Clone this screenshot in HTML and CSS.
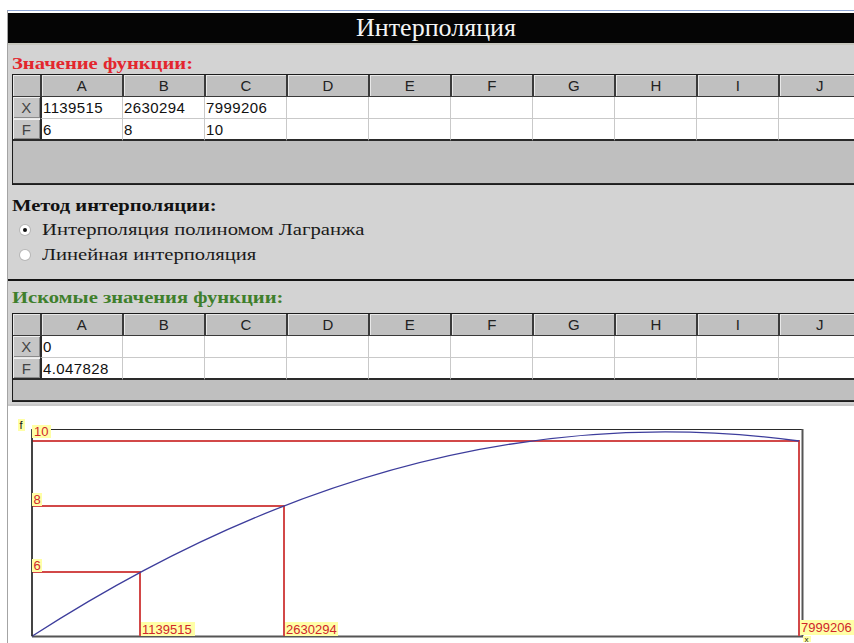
FILE: index.html
```html
<!DOCTYPE html>
<html lang="ru">
<head>
<meta charset="utf-8">
<title>Интерполяция</title>
<link rel="stylesheet" href="styles.css">
</head>
<body>
<div class="app">
  <div class="titlebar">Интерполяция</div>

  <div class="panel">
    <h2 class="caption caption-red">Значение функции:</h2>
    <div class="sheet">
      <div class="grid">
        <div class="corner"></div>
        <div class="col">A</div><div class="col">B</div><div class="col">C</div><div class="col">D</div><div class="col">E</div>
        <div class="col">F</div><div class="col">G</div><div class="col">H</div><div class="col">I</div><div class="col">J</div>

        <div class="row">X</div>
        <div class="cell">1139515</div><div class="cell">2630294</div><div class="cell">7999206</div><div class="cell"></div><div class="cell"></div>
        <div class="cell"></div><div class="cell"></div><div class="cell"></div><div class="cell"></div><div class="cell"></div>

        <div class="row last">F</div>
        <div class="cell last">6</div><div class="cell last">8</div><div class="cell last">10</div><div class="cell last"></div><div class="cell last"></div>
        <div class="cell last"></div><div class="cell last"></div><div class="cell last"></div><div class="cell last"></div><div class="cell last"></div>
      </div>
      <div class="sheet-rest tall"></div>
    </div>

    <h2 class="caption caption-black">Метод интерполяции:</h2>
    <ul class="methods">
      <li class="method"><span class="radio checked"></span><span class="method-text">Интерполяция полиномом Лагранжа</span></li>
      <li class="method"><span class="radio"></span><span class="method-text">Линейная интерполяция</span></li>
    </ul>
    <hr class="rule">

    <h2 class="caption caption-green">Искомые значения функции:</h2>
    <div class="sheet">
      <div class="grid">
        <div class="corner"></div>
        <div class="col">A</div><div class="col">B</div><div class="col">C</div><div class="col">D</div><div class="col">E</div>
        <div class="col">F</div><div class="col">G</div><div class="col">H</div><div class="col">I</div><div class="col">J</div>

        <div class="row">X</div>
        <div class="cell">0</div><div class="cell"></div><div class="cell"></div><div class="cell"></div><div class="cell"></div>
        <div class="cell"></div><div class="cell"></div><div class="cell"></div><div class="cell"></div><div class="cell"></div>

        <div class="row last">F</div>
        <div class="cell last">4.047828</div><div class="cell last"></div><div class="cell last"></div><div class="cell last"></div><div class="cell last"></div>
        <div class="cell last"></div><div class="cell last"></div><div class="cell last"></div><div class="cell last"></div><div class="cell last"></div>
      </div>
      <div class="sheet-rest"></div>
    </div>
  </div>

  <div class="chart">
    <svg class="plot" width="846" height="236" viewBox="8 407 846 236" xmlns="http://www.w3.org/2000/svg">
      <!-- frame -->
      <path d="M32 430.5 H802.5 V637.5 H32 Z" fill="none" stroke="#2a2a2a" stroke-width="1"/>
      <path d="M32 637.5 H803" stroke="#555" stroke-width="2"/>
      <path d="M802.5 430 V638" stroke="#555" stroke-width="2"/>
      <!-- guides to the nodes -->
      <g fill="none" stroke="#d24848" stroke-width="2">
        <path d="M32 442 H799 V637"/>
        <path d="M32 507 H284 V637"/>
        <path d="M32 573 H140 V637"/>
      </g>
      <!-- Lagrange polynomial -->
      <path d="M32 637.3 Q415.5 389.7 799 442" fill="none" stroke="#3d3d9c" stroke-width="1.3"/>
      <path d="M32 637 V430" stroke="#2a2a2a" stroke-width="1.5"/>

      <!-- labels -->
      <g class="tag">
        <rect x="18" y="420" width="7" height="12" fill="#ffffa6"/>
        <text x="19.5" y="430" class="tag-axis">f</text>

        <rect x="32" y="426" width="19" height="13" fill="#ffffa6"/>
        <text x="34" y="437">10</text>

        <rect x="32" y="494" width="10" height="13" fill="#ffffa6"/>
        <text x="33.5" y="505">8</text>

        <rect x="32" y="560" width="10" height="13" fill="#ffffa6"/>
        <text x="33.5" y="571">6</text>

        <rect x="141" y="623" width="54" height="14" fill="#ffffa6"/>
        <text x="142" y="635">1139515</text>

        <rect x="285" y="623" width="53" height="14" fill="#ffffa6"/>
        <text x="286" y="635">2630294</text>

        <rect x="800" y="621" width="54" height="15" fill="#ffffa6"/>
        <text x="801" y="633">7999206</text>

        <rect x="803" y="637" width="8" height="6" fill="#ffffa6"/>
        <text x="804.5" y="643" class="tag-axis tag-small">x</text>
      </g>
    </svg>
  </div>
</div>
</body>
</html>
```
FILE: styles.css
```css
html, body {
  margin: 0;
  padding: 0;
  background: #ffffff;
  overflow: hidden;
}

.app {
  margin: 10px 0 0 7px;
  border-top: 1px solid #8ea6d6;
  border-left: 1px solid #a4a4a4;
  padding-top: 2px;
  overflow: hidden;
  font-family: "Liberation Serif", "Times New Roman", serif;
}

.titlebar {
  height: 30px;
  line-height: 30px;
  padding-left: 10px;
  background: #050505;
  color: #f4f4f4;
  text-align: center;
  font-size: 26px;
  border-bottom: 2px solid #c6c6be;
}

.panel {
  background: #d3d3d3;
  padding: 9px 0 2px 4px;
}

/* the form's captions are drawn wide */
.caption {
  margin: 0;
  font-size: 17px;
  line-height: 19px;
  font-weight: bold;
  transform: scaleX(1.21);
  transform-origin: 0 50%;
}

.caption-red { color: #e3262e; margin-bottom: 1px; }
.caption-black { color: #111111; margin-top: 11px; }
.caption-green { color: #3f7f2c; margin-top: 7px; margin-bottom: 6px; }

/* spreadsheet-like grid */
.sheet {
  width: 858px;
  border: 1px solid #1c1c1c;
  border-right: none;
  background: #bfbfbf;
}

.grid {
  display: grid;
  grid-template-columns: 27px repeat(10, 82px);
  grid-auto-rows: 22px;
  font-family: "Liberation Sans", Arial, sans-serif;
  font-size: 15px;
  letter-spacing: 0.4px;
}

.corner,
.col {
  background: #c0c0c0;
  border-bottom: 1px solid #3a3a3a;
  box-shadow: inset 1px 1px 0 #e8e8e8;
}

.col {
  border-left: 2px solid #3a3a3a;
  text-align: center;
  line-height: 21px;
  color: #222;
}

.row {
  background: #c6c6c6;
  color: #444;
  text-align: center;
  line-height: 21px;
  border-bottom: 1px solid #e8e8e8;
  box-shadow: inset 1px 1px 0 #f0f0f0, inset -1px -1px 0 #8a8a8a;
}

.cell {
  background: #ffffff;
  border-left: 1px solid #c9c9c9;
  border-bottom: 1px solid #c9c9c9;
  padding-left: 1px;
  line-height: 21px;
  color: #111;
  white-space: nowrap;
  overflow: hidden;
}

.grid > .cell:nth-child(11n + 2) {
  border-left: 2px solid #2a2a2a;
}

.cell.last,
.row.last {
  border-bottom: 2px solid #2a2a2a;
}

.sheet-rest {
  height: 20px;
  border-bottom: 1px solid #2a2a2a;
}

.sheet-rest.tall {
  height: 42px;
}

/* interpolation method */
.methods {
  list-style: none;
  margin: 2px 0 0 0;
  padding: 0 0 0 8px;
}

.method {
  display: flex;
  align-items: center;
  height: 25px;
  font-size: 17.5px;
  color: #1a1a1a;
}

.method-text {
  display: inline-block;
  transform: scaleX(1.18);
  transform-origin: 0 50%;
}

.radio {
  width: 10px;
  height: 10px;
  margin-right: 12px;
  border-radius: 50%;
  background: #ffffff;
  box-shadow: 0 0 0 1px #b8b8b8;
  position: relative;
}

.radio.checked::after {
  content: "";
  position: absolute;
  left: 3px;
  top: 3px;
  width: 4px;
  height: 4px;
  border-radius: 50%;
  background: #111;
}

.rule {
  margin: 12px 0 0 -4px;
  border: none;
  border-top: 2px solid #141414;
}

/* chart */
.chart {
  background: #ffffff;
  border-top: 2px solid #c8c8c8;
  height: 240px;
}

.plot {
  display: block;
}

.tag text {
  font-family: "Liberation Sans", Arial, sans-serif;
  font-size: 13px;
  fill: #d0262a;
}

.tag .tag-axis {
  fill: #111;
  font-size: 11px;
}

.tag .tag-small {
  font-size: 8px;
}
```
